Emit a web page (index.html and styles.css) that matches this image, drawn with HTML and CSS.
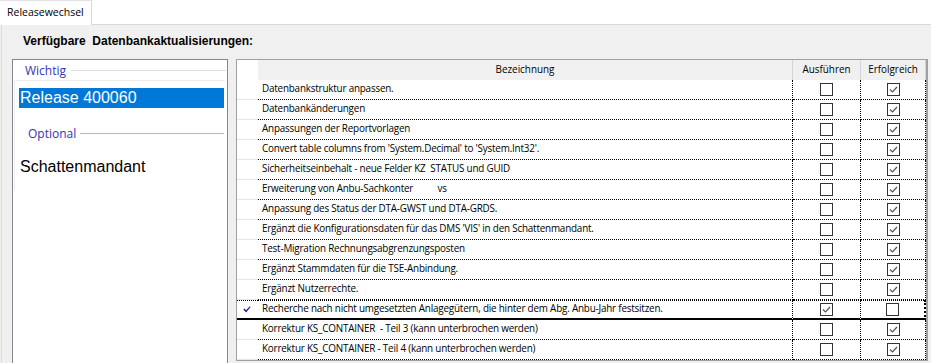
FILE: index.html
```html
<!DOCTYPE html>
<html lang="de">
<head>
    <meta charset="UTF-8">
    <title>Releasewechsel</title>
    <link rel="stylesheet" href="styles.css">
</head>
<body>
    <!-- Reiter oben -->
    <div class="tabbar">
        <div class="tab">Releasewechsel</div>
    </div>

    <div class="page">
        <h1 class="title">Verfügbare&nbsp; Datenbankaktualisierungen:</h1>

        <div class="main">
            <!-- Auswahl der Releases -->
            <div class="panel">
                <div class="group"><span>Wichtig</span></div>
                <div class="list">
                    <div class="item selected">Release 400060</div>
                    <div class="group sub"><span>Optional</span></div>
                    <div class="item">Schattenmandant</div>
                </div>
            </div>

            <!-- Tabelle der Aktualisierungen -->
            <div class="grid">
                <div class="row head">
                    <div class="rh"></div>
                    <div class="c name">Bezeichnung</div>
                    <div class="c aus">Ausführen</div>
                    <div class="c erf">Erfolgreich</div>
                </div>

                <div class="row">
                    <div class="rh"></div>
                    <div class="c name">Datenbankstruktur anpassen.</div>
                    <div class="c aus"><span class="cb"></span></div>
                    <div class="c erf"><span class="cb"><svg viewBox="0 0 11 11"><polyline points="2,5.5 4.5,8 9,3"/></svg></span></div>
                </div>
                <div class="row">
                    <div class="rh"></div>
                    <div class="c name">Datenbankänderungen</div>
                    <div class="c aus"><span class="cb"></span></div>
                    <div class="c erf"><span class="cb"><svg viewBox="0 0 11 11"><polyline points="2,5.5 4.5,8 9,3"/></svg></span></div>
                </div>
                <div class="row">
                    <div class="rh"></div>
                    <div class="c name">Anpassungen der Reportvorlagen</div>
                    <div class="c aus"><span class="cb"></span></div>
                    <div class="c erf"><span class="cb"><svg viewBox="0 0 11 11"><polyline points="2,5.5 4.5,8 9,3"/></svg></span></div>
                </div>
                <div class="row">
                    <div class="rh"></div>
                    <div class="c name">Convert table columns from 'System.Decimal' to 'System.Int32'.</div>
                    <div class="c aus"><span class="cb"></span></div>
                    <div class="c erf"><span class="cb"><svg viewBox="0 0 11 11"><polyline points="2,5.5 4.5,8 9,3"/></svg></span></div>
                </div>
                <div class="row">
                    <div class="rh"></div>
                    <div class="c name">Sicherheitseinbehalt - neue Felder KZ&nbsp; STATUS und GUID</div>
                    <div class="c aus"><span class="cb"></span></div>
                    <div class="c erf"><span class="cb"><svg viewBox="0 0 11 11"><polyline points="2,5.5 4.5,8 9,3"/></svg></span></div>
                </div>
                <div class="row">
                    <div class="rh"></div>
                    <div class="c name">Erweiterung von Anbu-Sachkonter <span class="gap"></span>vs</div>
                    <div class="c aus"><span class="cb"></span></div>
                    <div class="c erf"><span class="cb"><svg viewBox="0 0 11 11"><polyline points="2,5.5 4.5,8 9,3"/></svg></span></div>
                </div>
                <div class="row">
                    <div class="rh"></div>
                    <div class="c name">Anpassung des Status der DTA-GWST und DTA-GRDS.</div>
                    <div class="c aus"><span class="cb"></span></div>
                    <div class="c erf"><span class="cb"><svg viewBox="0 0 11 11"><polyline points="2,5.5 4.5,8 9,3"/></svg></span></div>
                </div>
                <div class="row">
                    <div class="rh"></div>
                    <div class="c name">Ergänzt die Konfigurationsdaten für das DMS 'VIS' in den Schattenmandant.</div>
                    <div class="c aus"><span class="cb"></span></div>
                    <div class="c erf"><span class="cb"><svg viewBox="0 0 11 11"><polyline points="2,5.5 4.5,8 9,3"/></svg></span></div>
                </div>
                <div class="row">
                    <div class="rh"></div>
                    <div class="c name">Test-Migration Rechnungsabgrenzungsposten</div>
                    <div class="c aus"><span class="cb"></span></div>
                    <div class="c erf"><span class="cb"><svg viewBox="0 0 11 11"><polyline points="2,5.5 4.5,8 9,3"/></svg></span></div>
                </div>
                <div class="row">
                    <div class="rh"></div>
                    <div class="c name">Ergänzt Stammdaten für die TSE-Anbindung.</div>
                    <div class="c aus"><span class="cb"></span></div>
                    <div class="c erf"><span class="cb"><svg viewBox="0 0 11 11"><polyline points="2,5.5 4.5,8 9,3"/></svg></span></div>
                </div>
                <div class="row">
                    <div class="rh"></div>
                    <div class="c name">Ergänzt Nutzerrechte.</div>
                    <div class="c aus"><span class="cb"></span></div>
                    <div class="c erf"><span class="cb"><svg viewBox="0 0 11 11"><polyline points="2,5.5 4.5,8 9,3"/></svg></span></div>
                </div>
                <div class="row sel">
                    <div class="rh"><svg class="mark" viewBox="0 0 8 7"><path d="M0.3 3.6 L1.6 2.6 L3 4.3 L6.9 0.2 L7.6 1 L3.1 6.6 Z"/></svg></div>
                    <div class="c name">Recherche nach nicht umgesetzten Anlagegütern, die hinter dem Abg. Anbu-Jahr festsitzen.</div>
                    <div class="c aus"><span class="cb"><svg viewBox="0 0 11 11"><polyline points="2,5.5 4.5,8 9,3"/></svg></span></div>
                    <div class="c erf"><span class="cb"></span></div>
                </div>
                <div class="row">
                    <div class="rh"></div>
                    <div class="c name">Korrektur KS_CONTAINER&nbsp; - Teil 3 (kann unterbrochen werden)</div>
                    <div class="c aus"><span class="cb"></span></div>
                    <div class="c erf"><span class="cb"><svg viewBox="0 0 11 11"><polyline points="2,5.5 4.5,8 9,3"/></svg></span></div>
                </div>
                <div class="row">
                    <div class="rh"></div>
                    <div class="c name">Korrektur KS_CONTAINER - Teil 4 (kann unterbrochen werden)</div>
                    <div class="c aus"><span class="cb"></span></div>
                    <div class="c erf"><span class="cb"><svg viewBox="0 0 11 11"><polyline points="2,5.5 4.5,8 9,3"/></svg></span></div>
                </div>
            </div>
        </div>
    </div>
</body>
</html>
```

FILE: styles.css
```css
* {
    margin: 0;
    padding: 0;
    box-sizing: border-box;
}

body {
    width: 931px;
    height: 363px;
    overflow: hidden;
    background: #f0f0f0;
    font-family: "Open Sans", sans-serif;
    color: #000;
}

/* Reiterleiste */
.tabbar {
    display: flex;
    height: 25px;
    background: #fff;
    border-bottom: 1px solid #d9d9d9;
}

.tab {
    width: 92px;
    height: 25px;
    padding-left: 7px;
    background: #fff;
    border-top: 1px solid #e3e3e3;
    border-right: 1px solid #d9d9d9;
    font-size: 10.5px;
    line-height: 22px;
}

.page {
    margin-left: 1px;
    border-left: 1px solid #dcdcdc;
    height: 338px;
}

.title {
    padding: 9px 0 0 21px;
    height: 34px;
    font-family: "Liberation Sans", Arial, sans-serif;
    font-size: 12px;
    line-height: 14px;
    font-weight: bold;
}

.main {
    display: flex;
    align-items: flex-start;
    gap: 8px;
    padding-left: 10px;
}

/* linke Liste */
.panel {
    width: 216px;
    height: 320px;
    background: #fff;
    border: 1px solid #828790;
}

.group {
    display: flex;
    align-items: center;
    height: 20px;
    padding-left: 12px;
    padding-right: 1px;
    font-size: 12px;
    color: #3434b4;
}

.group::after {
    content: "";
    flex: 1;
    height: 1px;
    margin-left: 5px;
    background: #dcdfe4;
}

.group.sub {
    margin-top: 15px;
    padding-left: 9px;
    padding-right: 0;
}

.group.sub::after {
    margin-left: 4px;
    background: #a9b7d9;
}

.list {
    width: 211px;
    height: 110px;
    margin-left: 1px;
    padding: 7px 1px 0 4px;
    border-left: 1px solid #ececec;
    border-top: 1px solid #ececec;
}

.item {
    height: 20px;
    padding-left: 1px;
    font-family: "Liberation Sans", Arial, sans-serif;
    font-size: 16px;
    line-height: 20px;
    margin-top: 14px;
}

.item.selected {
    margin-top: 0;
    background: #0078d7;
    color: #fff;
}

/* Tabelle */
.grid {
    width: 692px;
    height: 302px;
    background: #fff;
    border: 1px solid #a0a0a0;
    border-right-width: 2px;
}

.row {
    display: grid;
    grid-template-columns: 21px 535px 68px 65px;
    height: 20px;
    font-size: 9.9px;
    letter-spacing: -0.2px;
}

.row .c {
    border-bottom: 1px dotted #000;
    border-right: 1px dotted #000;
    line-height: 17px;
}

.row .rh {
    border-bottom: 1px solid #e6e6e6;
}

.row .name {
    padding-left: 4px;
    white-space: nowrap;
    overflow: hidden;
}

.row .aus, .row .erf {
    display: flex;
    align-items: center;
    justify-content: center;
}

.row.head .c {
    background: #f0f0f0;
    border-bottom: none;
    border-right: 1px solid #d5d5d5;
    text-align: center;
    line-height: 19px;
    padding-left: 0;
    display: block;
    letter-spacing: 0;
}

.row.head .rh {
    border-bottom: none;
}

.row.sel .c, .row.sel .rh {
    border-top: 1px dotted #000;
    border-bottom: 2px solid #000;
    line-height: 15px;
}

.row.sel .erf {
    border-right: 2px dotted #000;
}

.gap {
    display: inline-block;
    width: 22px;
}

.cb {
    display: block;
    width: 13px;
    height: 13px;
    border: 1px solid #333;
    background: #fff;
    margin-top: -1px;
}

.cb svg {
    display: block;
    width: 11px;
    height: 11px;
    fill: none;
    stroke: #555;
    stroke-width: 1.2;
}

.rh {
    display: flex;
    align-items: center;
    justify-content: center;
}

.mark {
    width: 8px;
    height: 7px;
    fill: #23238c;
    margin-left: -2px;
}
```
